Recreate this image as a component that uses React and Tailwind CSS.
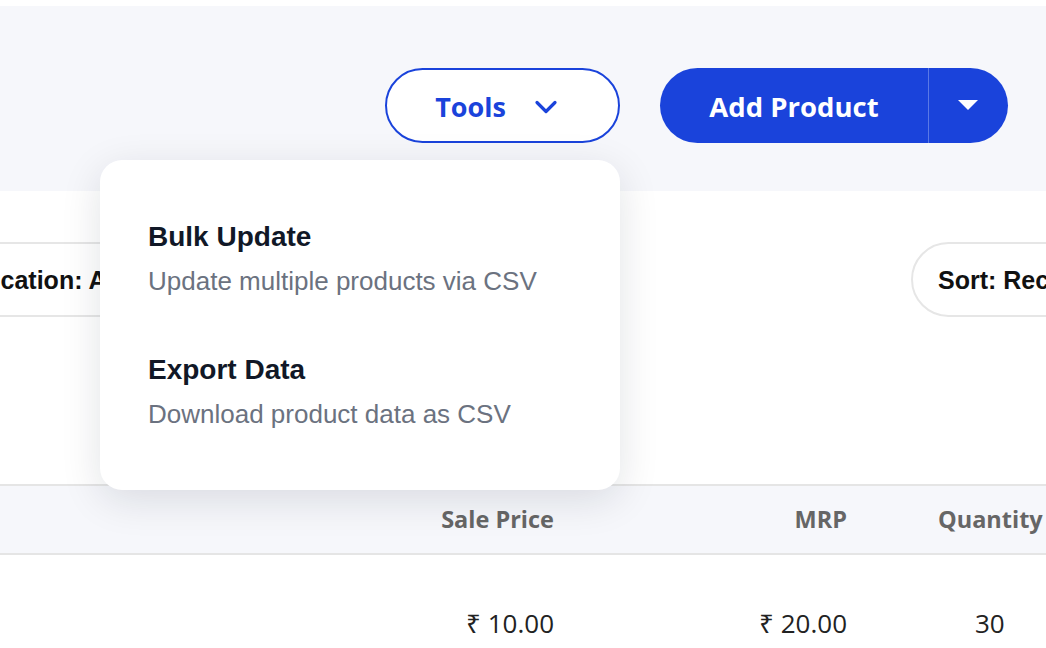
import React from 'react';

const sans = { fontFamily: '"Open Sans", "Noto Sans", sans-serif' };

function ToolsMenu() {
	const items = [
		{ title: 'Bulk Update', desc: 'Update multiple products via CSV' },
		{ title: 'Export Data', desc: 'Download product data as CSV' }
	];
	return (
		<div className="absolute left-[100px] top-[160px] w-[520px] h-[330px] bg-white rounded-[22px] shadow-[0_10px_40px_rgba(17,24,39,0.12)] pt-[60px] pl-[48px] font-['Liberation_Sans',Arial,sans-serif]">
			{items.map((item) => (
				<div key={item.title} className="mb-[56px]">
					<div className="text-[28px] leading-[34px] font-bold text-[#111827]">{item.title}</div>
					<div className="mt-[11px] text-[26px] leading-[32px] text-[#6b7280]">{item.desc}</div>
				</div>
			))}
		</div>
	);
}

export default function App() {
	return (
		<div className="relative w-[1046px] h-[648px] overflow-hidden bg-white">
			{/* header */}
			<div className="mt-[6px] h-[185px] bg-[#f6f7fb] flex justify-end items-start pt-[62px] pr-[38px] gap-[40px]" style={sans}>
				<button className="w-[235px] h-[75px] rounded-full border-2 border-[#1a43db] bg-white flex items-center justify-center gap-[28px] pr-[12px] pt-[3px] text-[#1a43db] text-[27px] font-bold">
					Tools
					<svg width="24" height="16" viewBox="0 0 24 16" fill="none" stroke="currentColor" strokeWidth="3.2" strokeLinecap="round" strokeLinejoin="round">
						<path d="M3 3.5l9 9 9-9" />
					</svg>
				</button>
				<div className="w-[348px] h-[75px] rounded-full bg-[#1a43db] flex items-stretch text-white">
					<div className="w-[268px] flex items-center justify-center pt-[3px] text-[27.5px] font-bold">Add Product</div>
					<div className="w-px bg-[#5a78e6]" />
					<div className="flex-1 flex items-center justify-center pr-[2px]">
						<svg width="20" height="11" viewBox="0 0 20 11">
							<path d="M0 0h20L10 10z" fill="white" />
						</svg>
					</div>
				</div>
			</div>

			{/* filters */}
			<div className="mt-[51px] flex items-center font-['Liberation_Sans',Arial,sans-serif] text-[25px] font-bold text-[#111] whitespace-nowrap">
				<div className="-ml-[62px] h-[75px] w-[620px] shrink-0 border-y-2 border-[#e6e6e6] rounded-r-full flex items-center pl-[32px] pt-[2px]">
					Location: All
				</div>
				<div className="ml-auto -mr-[125px] h-[75px] w-[260px] shrink-0 border-2 border-[#e6e6e6] rounded-full flex items-center pl-[25px] pt-[2px]">
					Sort: Recent
				</div>
			</div>

			{/* table */}
			<div className="mt-[167px]" style={sans}>
				<div className="h-[71px] bg-[#f6f7fb] border-y-2 border-[#e5e5e5] grid grid-cols-[554px_293px_1fr] items-center text-[23.5px] font-bold text-[#666] whitespace-nowrap">
					<div className="text-right">Sale Price</div>
					<div className="text-right">MRP</div>
					<div className="pl-[91px]">Quantity</div>
				</div>
				<div className="h-[136px] grid grid-cols-[554px_293px_1fr] items-center text-[26px] text-[#222] whitespace-nowrap">
					<div className="text-right">₹ 10.00</div>
					<div className="text-right">₹ 20.00</div>
					<div className="pl-[128px]">30</div>
				</div>
			</div>

			<ToolsMenu />
		</div>
	);
}
